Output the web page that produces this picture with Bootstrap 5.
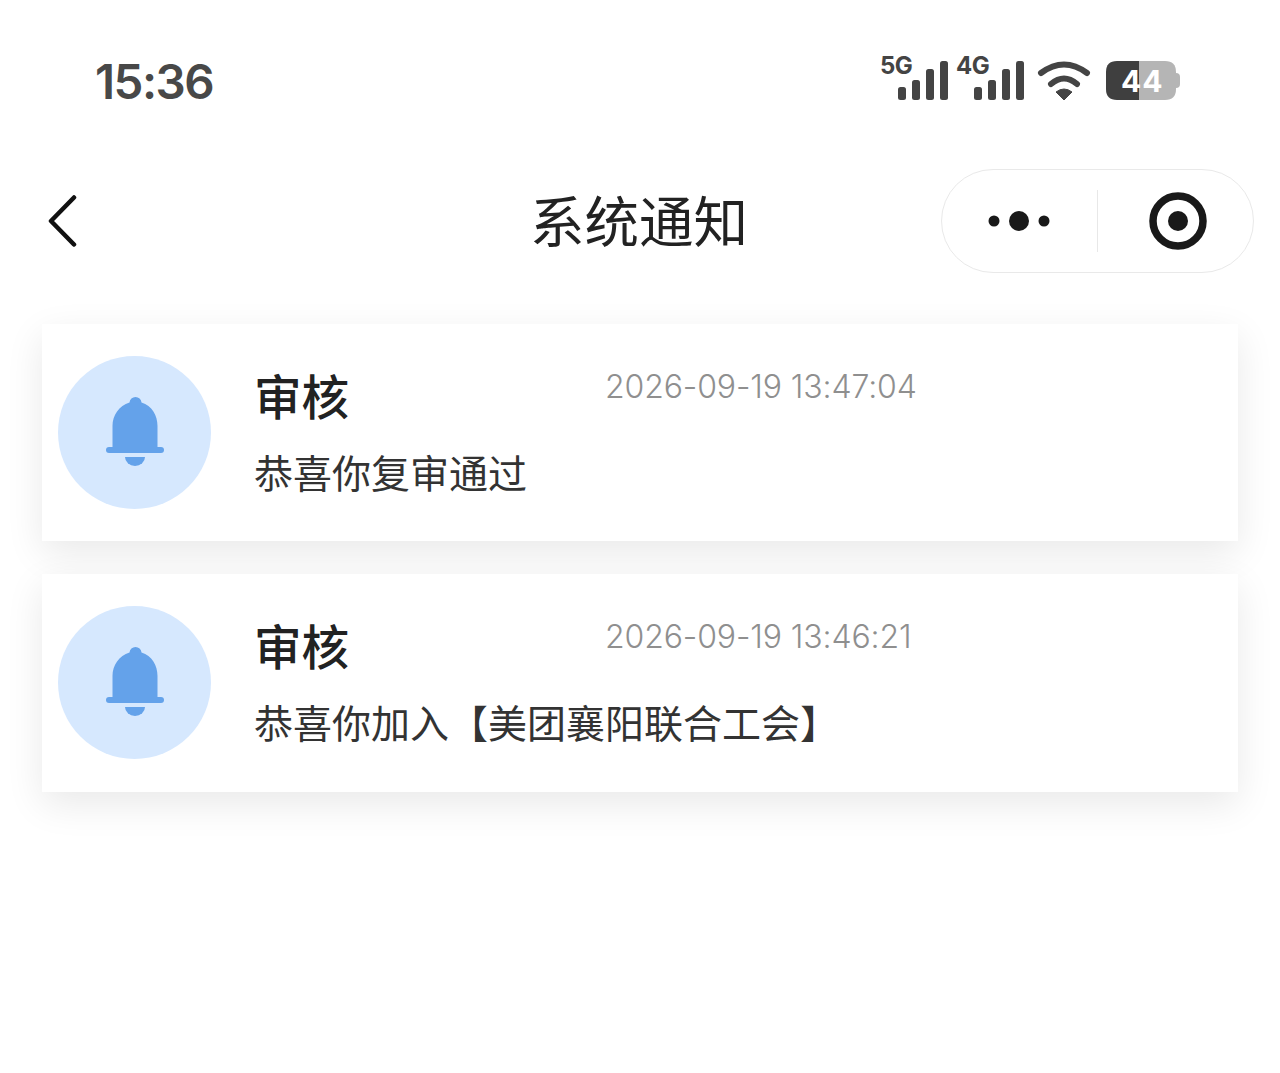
<!doctype html>
<html lang="zh-CN">
<head>
<meta charset="utf-8">
<title>系统通知</title>
<link href="https://cdn.jsdelivr.net/npm/bootstrap@5.3.0/dist/css/bootstrap.min.css" rel="stylesheet">
<style>
html,body{background:#fff;height:100%;}
body{font-family:"Noto Sans CJK SC","Noto Sans",sans-serif;overflow:hidden;}
.status-zone{height:169px;padding:45px 97px 0 95px;}
.clock{font-family:"Inter","Noto Sans",sans-serif;font-size:47.500px;font-weight:600;line-height:54px;color:#484848;letter-spacing:-1.5px;margin-top:10px;}
.nav-zone{display:grid;grid-template-columns:1fr auto 1fr;align-items:center;padding:0 26px;height:104px;}
.back-btn{margin-left:22px;line-height:0;}
.page-title{font-size:54.500px;font-weight:400;color:#222;line-height:1;margin-top:-4px;margin-right:2px;}
.capsule{width:313px;height:104px;border:1px solid #e9e9e9;border-radius:52px;justify-self:end;background:#fff;}
.capsule-part{height:100%;}
.capsule-part-start{flex:0 0 155px;}
.capsule-part-end{flex:1 1 0;padding-left:5px;}
.capsule-rule{width:1px;height:62px;background:#e8e8e8;}
.msg-list{padding:51px 42px 0;gap:32.900px;}
.msg-item{height:217.400px;background:#fff;border-radius:0;box-shadow:0 12px 36px rgba(0,0,0,.09);padding:32px 16px;}
.avatar-disc{width:153px;height:153px;border-radius:50%;background:#d6e8fe;flex:none;}
.bell-mark{margin-bottom:2px;}
.msg-body{margin-left:43px;}
.msg-head{height:62px;}
.msg-title{width:351px;font-size:47.500px;font-weight:500;line-height:62px;color:#222;margin-top:8px;}
.msg-date{font-family:"Inter","Noto Sans",sans-serif;font-size:32px;font-weight:300;color:#8f8f8f;line-height:60px;letter-spacing:-.12px;margin-top:1px;}
.msg-text{font-size:39px;line-height:54px;color:#333;font-weight:400;margin-top:26px;}
.sb-txt{font-family:"Inter","Noto Sans",sans-serif;font-weight:700;}
</style>
</head>
<body>
<header class="status-zone d-flex justify-content-between align-items-start">
  <div class="clock">15:36</div>
  <svg width="305" height="58" viewBox="878 45 305 58" role="img">
    <g fill="#444">
      <text class="sb-txt" x="880" y="74" font-size="24" letter-spacing="-.6">5G</text>
      <rect x="898" y="87" width="8" height="13" rx="2.500"/>
      <rect x="912" y="80" width="8" height="20" rx="2.500"/>
      <rect x="926" y="69" width="8" height="31" rx="2.500"/>
      <rect x="940" y="61" width="8" height="39" rx="2.500"/>
      <text class="sb-txt" x="956" y="74" font-size="24" letter-spacing="-.6">4G</text>
      <rect x="974" y="87" width="8" height="13" rx="2.500"/>
      <rect x="988" y="80" width="8" height="20" rx="2.500"/>
      <rect x="1002" y="69" width="8" height="31" rx="2.500"/>
      <rect x="1016" y="61" width="8" height="39" rx="2.500"/>
    </g>
    <g fill="none" stroke="#444" stroke-width="6" stroke-linecap="round">
      <path d="M1041 73Q1064 56 1087 73"/>
      <path d="M1051 84Q1064 73 1077 84"/>
    </g>
    <path d="M1056 92Q1064 86 1072 92L1064 100Z" fill="#444" stroke="#444" stroke-width="1" stroke-linejoin="round"/>
    <path d="M1139 61H1165Q1176 61 1176 72V89Q1176 100 1165 100H1139Z" fill="#b5b5b5"/>
    <path d="M1176 73Q1180 73 1180 77V84Q1180 88 1176 88Z" fill="#b5b5b5"/>
    <path d="M1139 61H1117Q1106 61 1106 72V89Q1106 100 1117 100H1139Z" fill="#3f3f3f"/>
    <text class="sb-txt" x="1121" y="92" font-size="30" fill="#fff" letter-spacing="1">44</text>
  </svg>
</header>

<nav class="nav-zone">
  <div class="back-btn">
    <svg width="30" height="52" viewBox="0 0 30 52"><path d="M26 2.500L3 26L26 49.500" fill="none" stroke="#111" stroke-width="4.500" stroke-linecap="round" stroke-linejoin="round"/></svg>
  </div>
  <div class="page-title">系统通知</div>
  <div class="capsule d-flex align-items-center">
    <div class="capsule-part capsule-part-start d-flex align-items-center justify-content-center">
      <svg width="64" height="22" viewBox="0 0 64 22"><g fill="#191919"><circle cx="6" cy="11" r="5.500"/><circle cx="31" cy="11" r="10"/><circle cx="56" cy="11" r="5.500"/></g></svg>
    </div>
    <div class="capsule-rule"></div>
    <div class="capsule-part capsule-part-end d-flex align-items-center justify-content-center">
      <svg width="60" height="60" viewBox="0 0 60 60"><circle cx="30" cy="30" r="25" fill="none" stroke="#191919" stroke-width="7.500"/><circle cx="30" cy="30" r="10" fill="#191919"/></svg>
    </div>
  </div>
</nav>

<main class="msg-list d-flex flex-column">
  <section class="msg-item d-flex">
    <div class="avatar-disc d-flex align-items-center justify-content-center">
      <svg class="bell-mark" width="60" height="72" viewBox="0 0 60 72"><g fill="#64a2ea"><path d="M30.500 1a6 6 0 0 1 6 5.500C47 10 52.500 19 52.500 30V52H7.500V30C7.500 19 14 10 24.500 6.500A6 6 0 0 1 30.500 1Z"/><rect x="1" y="51" width="58" height="6" rx="3"/><path d="M20 61H40A10 9 0 0 1 20 61Z"/></g></svg>
    </div>
    <div class="msg-body flex-grow-1">
      <div class="msg-head d-flex">
        <div class="msg-title">审核</div>
        <div class="msg-date">2026-09-19 13:47:04</div>
      </div>
      <div class="msg-text">恭喜你复审通过</div>
    </div>
  </section>
  <section class="msg-item d-flex">
    <div class="avatar-disc d-flex align-items-center justify-content-center">
      <svg class="bell-mark" width="60" height="72" viewBox="0 0 60 72"><g fill="#64a2ea"><path d="M30.500 1a6 6 0 0 1 6 5.500C47 10 52.500 19 52.500 30V52H7.500V30C7.500 19 14 10 24.500 6.500A6 6 0 0 1 30.500 1Z"/><rect x="1" y="51" width="58" height="6" rx="3"/><path d="M20 61H40A10 9 0 0 1 20 61Z"/></g></svg>
    </div>
    <div class="msg-body flex-grow-1">
      <div class="msg-head d-flex">
        <div class="msg-title">审核</div>
        <div class="msg-date">2026-09-19 13:46:21</div>
      </div>
      <div class="msg-text">恭喜你加入【美团襄阳联合工会】</div>
    </div>
  </section>
</main>
<script src="https://cdn.jsdelivr.net/npm/bootstrap@5.3.0/dist/js/bootstrap.bundle.min.js"></script>
</body>
</html>
